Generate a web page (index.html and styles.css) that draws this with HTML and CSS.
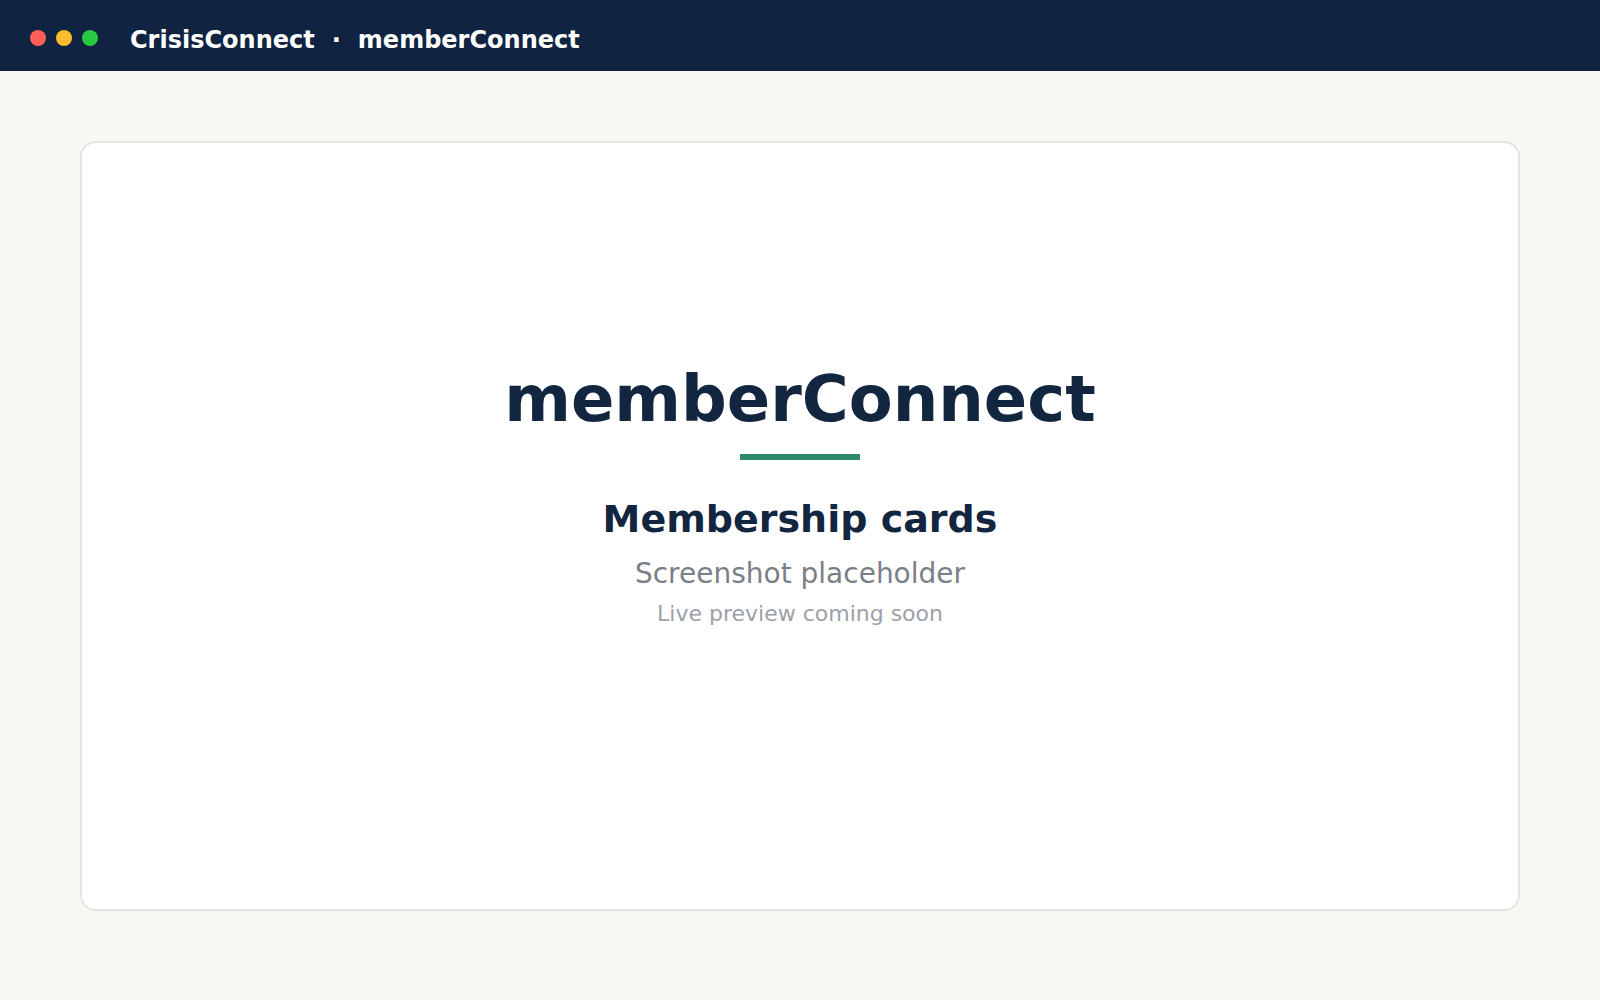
FILE: index.html
```html
<!DOCTYPE html>
<html lang="en">
<head>
<meta charset="utf-8">
<title>CrisisConnect · memberConnect</title>
<link rel="stylesheet" href="styles.css">
</head>
<body>
<header class="titlebar">
  <div class="lights">
    <span class="light red"></span>
    <span class="light yellow"></span>
    <span class="light green"></span>
  </div>
  <div class="crumbs">
    <span>CrisisConnect</span>
    <span class="sep">·</span>
    <span>memberConnect</span>
  </div>
</header>
<main class="page">
  <section class="card">
    <div class="content">
      <h1 class="title">memberConnect</h1>
      <div class="rule"></div>
      <h2 class="subtitle">Membership cards</h2>
      <p class="placeholder">Screenshot placeholder</p>
      <p class="note">Live preview coming soon</p>
    </div>
  </section>
</main>
</body>
</html>
```

FILE: styles.css
```css
* { box-sizing: border-box; }
html, body { margin: 0; padding: 0; }
body {
  width: 1600px;
  height: 1000px;
  background: #f8f7f4;
  font-family: "DejaVu Sans", "Noto Sans", sans-serif;
  overflow: hidden;
}
.titlebar {
  height: 71px;
  background: #102441;
  display: flex;
  align-items: center;
  padding: 4px 0 0 30px;
}
.lights {
  display: flex;
  gap: 10px;
  margin-right: 32px;
}
.light {
  width: 16px;
  height: 16px;
  border-radius: 50%;
  display: block;
}
.red { background: #ff5f57; }
.yellow { background: #febc2e; }
.green { background: #28c840; }
.crumbs {
  display: flex;
  align-items: center;
  gap: 17px;
  color: #ffffff;
  font-weight: bold;
  font-size: 24px;
  margin-top: 4px;
}
.page {
  padding: 70px 80px 0 80px;
}
.card {
  height: 770px;
  background: #ffffff;
  border: 2px solid #e6e4df;
  border-radius: 16px;
  display: flex;
  align-items: center;
  justify-content: center;
  padding-bottom: 58px;
}
.content {
  display: flex;
  flex-direction: column;
  align-items: center;
  text-align: center;
}
.title {
  margin: 0;
  font-size: 64px;
  line-height: 64px;
  font-weight: bold;
  color: #12263f;
}
.rule {
  width: 120px;
  height: 6px;
  background: #2e8a6b;
  margin-top: 23px;
}
.subtitle {
  margin: 37px 0 0 0;
  font-size: 38px;
  line-height: 1.2;
  font-weight: bold;
  color: #12263f;
}
.placeholder {
  margin: 15px 0 0 0;
  font-size: 28px;
  line-height: 1.2;
  color: #7b7f87;
}
.note {
  margin: 10px 0 0 0;
  font-size: 22px;
  line-height: 1.2;
  color: #9da1a8;
}
```
